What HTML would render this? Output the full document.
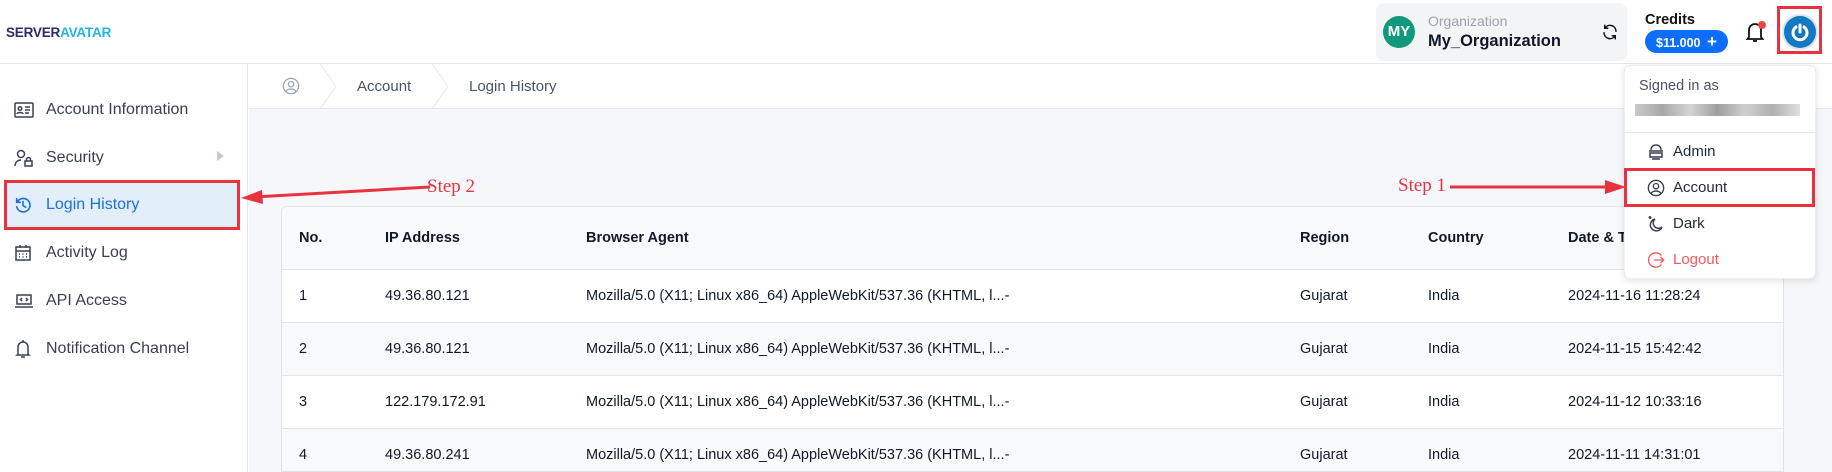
<!DOCTYPE html>
<html><head><meta charset="utf-8"><style>
*{box-sizing:border-box;margin:0;padding:0}
body{width:1832px;height:472px;overflow:hidden;background:#fff;font-family:"Liberation Sans",sans-serif;color:#1f2937;position:relative}
.abs{position:absolute}
.hdr{left:0;top:0;width:1832px;height:64px;border-bottom:1px solid #e5e7eb;background:#fff}
.side{left:0;top:64px;width:248px;height:408px;border-right:1px solid #e5e7eb;background:#fff}
.main{left:249px;top:109px;width:1583px;height:363px;background:#f6f7fa}
.bc{left:249px;top:64px;width:1583px;height:45px;border-bottom:1px solid #e5e7eb;background:#fff;font-size:15px;color:#4b5563}
.si{position:absolute;left:0;width:247px;height:44px;font-size:16px;color:#374151;display:flex;align-items:center}
.si svg{position:absolute;left:14px}
.si span{position:absolute;left:46px}
.card{left:281px;top:206px;width:1503px;height:266px;background:#fff;border:1px solid #e1e4ea;border-radius:6px 6px 0 0;overflow:hidden}
.row{position:absolute;left:0;width:1503px;height:53px;border-bottom:1px solid #e3e6eb;font-size:14.5px;color:#111827}
.row div{position:absolute;top:18px}
.th{font-weight:bold;background:#f8f9fb;height:63px}
.th div{top:23px}
.alt{background:#f8f9fb}
.dd{left:1624px;top:65px;width:192px;height:214px;background:#fff;border-radius:6px;box-shadow:0 2px 8px rgba(0,0,0,.12);border:1px solid #eceef2}
.di{position:absolute;left:0;width:190px;height:36px;font-size:15px;color:#1f2937}
.di span{position:absolute;left:48px;top:9px}
.di svg{position:absolute;left:22px;top:9px}
.step{font-family:"Liberation Serif",serif;color:#e8333f;font-size:19px}
</style></head><body>
<div class="abs hdr"></div>
<div class="abs" style="left:6px;top:25px;font-size:13.5px;font-weight:bold;letter-spacing:-0.2px"><span style="color:#2b2a6b">SERVER</span><span style="color:#22b4e8">AVATAR</span></div>

<div class="abs" style="left:1376px;top:3px;width:251px;height:58px;background:#f3f4f6;border-radius:8px"></div>
<div class="abs" style="left:1383px;top:16px;width:32px;height:32px;border-radius:50%;background:#0f9a7e;color:#fff;font-weight:bold;font-size:15px;text-align:center;line-height:32px">MY</div>
<div class="abs" style="left:1428px;top:13px;font-size:14px;color:#9ca3af">Organization</div>
<div class="abs" style="left:1428px;top:32px;font-size:16.5px;font-weight:bold;color:#111827;font-weight:600">My_Organization</div>
<svg class="abs" style="left:1601px;top:23px" width="18" height="18" viewBox="0 0 24 24" fill="none" stroke="#111" stroke-width="2" stroke-linecap="round"><path d="M20 11a8 8 0 0 0-14.5-4.5M4 13a8 8 0 0 0 14.5 4.5"/><path d="M5 3v4h4M19 21v-4h-4"/></svg>
<div class="abs" style="left:1645px;top:12px;font-size:14.5px;font-weight:bold;color:#111">Credits</div>
<div class="abs" style="left:1645px;top:30px;width:83px;height:23px;border-radius:12px;background:#0d6efd;color:#fff;font-size:12.5px;font-weight:bold;line-height:23px;padding-left:11px">$11.000 <span style="font-size:17px;margin-left:3px">+</span></div>
<svg class="abs" style="left:1746px;top:21px" width="18" height="22" viewBox="0 0 18 22" fill="none" stroke="#111" stroke-width="1.8"><path d="M3 16V9a6 6 0 0 1 12 0v7l1.5 2h-15z"/><path d="M7 20h4"/></svg>
<div class="abs" style="left:1758px;top:21px;width:8px;height:8px;border-radius:50%;background:#ef4444"></div>
<div class="abs" style="left:1777px;top:6px;width:45px;height:48px;border:3px solid #e8333f"></div>
<div class="abs" style="left:1784px;top:16px;width:32px;height:32px;border-radius:50%;background:#1479c2;box-shadow:0 0 0 2px #dbe5ef"></div>
<svg class="abs" style="left:1790px;top:22px" width="20" height="20" viewBox="0 0 20 20" fill="none" stroke="#fff" stroke-width="3" stroke-linecap="round"><path d="M6 5a7 7 0 1 0 8 0"/><path d="M10 3v7"/></svg>

<div class="abs side"></div>
<div class="si" style="top:88px"><svg width="20" height="16" viewBox="0 0 20 16" fill="none" stroke="#374151" stroke-width="1.5"><rect x="1" y="1" width="18" height="14" rx="1"/><circle cx="6" cy="6.5" r="1.8"/><path d="M3 12c.5-2 5.5-2 6 0M11 5h5M11 8h5M11 11h4"/></svg><span>Account Information</span></div>
<div class="si" style="top:136px"><svg width="20" height="20" viewBox="0 0 20 20" fill="none" stroke="#374151" stroke-width="1.5"><circle cx="7" cy="6" r="3.5"/><path d="M1 18c0-4 3-6 6-6"/><rect x="11" y="13" width="7" height="5"/><path d="M12.5 13v-1.5a2 2 0 0 1 4 0V13"/></svg><span>Security</span></div>
<div class="abs" style="left:217px;top:151px;width:0;height:0;border-left:7px solid #c4c7cc;border-top:5px solid transparent;border-bottom:5px solid transparent"></div>
<div class="abs" style="left:4px;top:180px;width:236px;height:50px;background:#e3eefb;border:3px solid #e8333f"></div>
<div class="si" style="top:183px;color:#1d6fe0"><svg width="18" height="18" viewBox="0 0 20 20" fill="none" stroke="#1d6fe0" stroke-width="1.8" stroke-linecap="round"><path d="M3.5 7A7.5 7.5 0 1 1 3 12"/><path d="M3 3v4h4M10 6v4.5l3 2"/></svg><span>Login History</span></div>
<div class="si" style="top:231px"><svg width="18" height="18" viewBox="0 0 18 18" fill="none" stroke="#374151" stroke-width="1.5"><rect x="2" y="3" width="14" height="13"/><path d="M2 7h14M6 1v3M12 1v3M5 10h1M8.5 10h1M12 10h1M5 13h1M8.5 13h1M12 13h1"/></svg><span>Activity Log</span></div>
<div class="si" style="top:279px"><svg width="20" height="16" viewBox="0 0 20 16" fill="none" stroke="#374151" stroke-width="1.5"><rect x="3" y="2" width="14" height="9"/><path d="M1 14h18M8 5l-1.5 1.5L8 8M12 5l1.5 1.5L12 8"/></svg><span>API Access</span></div>
<div class="si" style="top:327px"><svg width="18" height="20" viewBox="0 0 18 20" fill="none" stroke="#374151" stroke-width="1.5"><path d="M4 15V8a5 5 0 0 1 10 0v7l1 1H3z"/><path d="M7 18h4M9 1v2"/></svg><span>Notification Channel</span></div>

<div class="abs bc"></div>
<svg class="abs" style="left:282px;top:77px" width="18" height="18" viewBox="0 0 20 20" fill="none" stroke="#9ca3af" stroke-width="1.4"><circle cx="10" cy="10" r="8.5"/><circle cx="10" cy="8" r="3"/><path d="M4.5 16c2-3.5 9-3.5 11 0"/></svg>
<svg class="abs" style="left:318px;top:64px" width="20" height="45" viewBox="0 0 20 45" fill="none" stroke="#e5e7eb"><path d="M2 0l16 22.5L2 45"/></svg>
<div class="abs" style="left:357px;top:78px;font-size:15px;color:#4b5563">Account</div>
<svg class="abs" style="left:430px;top:64px" width="20" height="45" viewBox="0 0 20 45" fill="none" stroke="#e5e7eb"><path d="M2 0l16 22.5L2 45"/></svg>
<div class="abs" style="left:469px;top:78px;font-size:15px;color:#4b5563">Login History</div>

<div class="abs main"></div>
<div class="abs card">
<div class="row th" style="top:0"><div style="left:17px">No.</div><div style="left:103px">IP Address</div><div style="left:304px">Browser Agent</div><div style="left:1018px">Region</div><div style="left:1146px">Country</div><div style="left:1286px">Date &amp; Time</div></div>
<div class="row" style="top:63px"><div style="left:17px">1</div><div style="left:103px">49.36.80.121</div><div style="left:304px">Mozilla/5.0 (X11; Linux x86_64) AppleWebKit/537.36 (KHTML, l...-</div><div style="left:1018px">Gujarat</div><div style="left:1146px">India</div><div style="left:1286px">2024-11-16 11:28:24</div></div>
<div class="row alt" style="top:116px"><div style="left:17px">2</div><div style="left:103px">49.36.80.121</div><div style="left:304px">Mozilla/5.0 (X11; Linux x86_64) AppleWebKit/537.36 (KHTML, l...-</div><div style="left:1018px">Gujarat</div><div style="left:1146px">India</div><div style="left:1286px">2024-11-15 15:42:42</div></div>
<div class="row" style="top:169px"><div style="left:17px">3</div><div style="left:103px">122.179.172.91</div><div style="left:304px">Mozilla/5.0 (X11; Linux x86_64) AppleWebKit/537.36 (KHTML, l...-</div><div style="left:1018px">Gujarat</div><div style="left:1146px">India</div><div style="left:1286px">2024-11-12 10:33:16</div></div>
<div class="row alt" style="top:222px"><div style="left:17px">4</div><div style="left:103px">49.36.80.241</div><div style="left:304px">Mozilla/5.0 (X11; Linux x86_64) AppleWebKit/537.36 (KHTML, l...-</div><div style="left:1018px">Gujarat</div><div style="left:1146px">India</div><div style="left:1286px">2024-11-11 14:31:01</div></div>
</div>

<div class="abs dd">
<div class="abs" style="left:14px;top:12px;font-size:14.5px;color:#4b5563">Signed in as</div>
<div class="abs" style="left:10px;top:38px;width:165px;height:12px;background:linear-gradient(90deg,#c9c9c9,#a8a8a8,#d4d4d4,#9e9e9e,#cfcfcf,#b0b0b0,#e0e0e0)"></div>
<div class="abs" style="left:0;top:66px;width:190px;height:1px;background:#e5e7eb"></div>
<div class="di" style="top:68px"><svg width="18" height="18" viewBox="0 0 18 18" fill="none" stroke="#374151" stroke-width="1.5"><path d="M4 7c0-3 2-5 5-5s5 2 5 5"/><path d="M2 8h14M3 10h12v4H3zM5 16h8"/></svg><span>Admin</span></div>
<div class="di" style="top:104px"><svg width="18" height="18" viewBox="0 0 20 20" fill="none" stroke="#374151" stroke-width="1.5"><circle cx="10" cy="10" r="8.5"/><circle cx="10" cy="8" r="3"/><path d="M4.5 16c2-3.5 9-3.5 11 0"/></svg><span>Account</span></div>
<div class="di" style="top:140px"><svg width="18" height="18" viewBox="0 0 18 18" fill="none" stroke="#374151" stroke-width="1.5"><path d="M8 4a6 6 0 1 0 7 8 5 5 0 0 1-7-8z"/><path d="M3 1v3M1.5 2.5h3"/></svg><span>Dark</span></div>
<div class="di" style="top:176px;color:#ef5a5f"><svg width="18" height="18" viewBox="0 0 20 20" fill="none" stroke="#ef5a5f" stroke-width="1.5"><path d="M16 5a8 8 0 1 0 0 10"/><path d="M8 10h11M15 6.5L18.5 10 15 13.5"/></svg><span>Logout</span></div>
</div>
<div class="abs" style="left:1624px;top:168px;width:191px;height:39px;border:3px solid #e8333f"></div>

<div class="abs step" style="left:1398px;top:175px">Step 1</div>
<svg class="abs" style="left:1450px;top:176px" width="178" height="22" viewBox="0 0 178 22"><path d="M0 11H162" stroke="#e8333f" stroke-width="3"/><path d="M176 11L155 4v14z" fill="#e8333f"/></svg>
<div class="abs step" style="left:427px;top:176px">Step 2</div>
<svg class="abs" style="left:238px;top:180px" width="192" height="26" viewBox="0 0 192 26"><path d="M192 7L16 17" stroke="#e8333f" stroke-width="3"/><path d="M3 18l21-8 1 14z" fill="#e8333f"/></svg>
</body></html>
